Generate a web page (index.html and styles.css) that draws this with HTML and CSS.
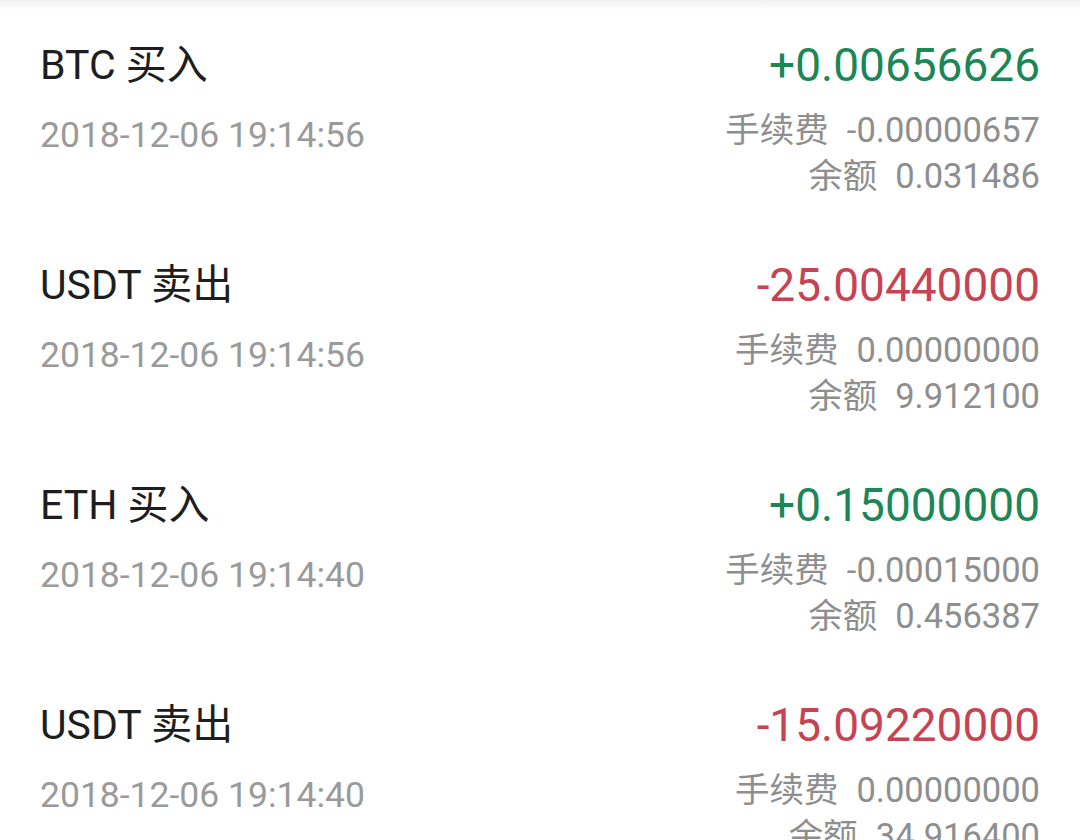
FILE: index.html
```html
<!DOCTYPE html>
<html lang="zh-CN">
<head>
	<meta charset="utf-8" />
	<meta name="viewport" content="width=device-width, initial-scale=1.0" />
	<title>资产记录</title>
	<link rel="stylesheet" href="styles.css">
</head>

<body>
	<div class="top-shade"></div>

	<ul class="record-list">
		<li class="record">
			<div class="record-info">
				<div class="record-title">BTC 买入</div>
				<div class="record-time">2018-12-06 19:14:56</div>
			</div>
			<div class="record-amounts">
				<div class="record-change up">+0.00656626</div>
				<div class="record-line"><span class="label">手续费</span>-0.00000657</div>
				<div class="record-line"><span class="label">余额</span>0.031486</div>
			</div>
		</li>
		<li class="record">
			<div class="record-info">
				<div class="record-title">USDT 卖出</div>
				<div class="record-time">2018-12-06 19:14:56</div>
			</div>
			<div class="record-amounts">
				<div class="record-change down">-25.00440000</div>
				<div class="record-line"><span class="label">手续费</span>0.00000000</div>
				<div class="record-line"><span class="label">余额</span>9.912100</div>
			</div>
		</li>
		<li class="record">
			<div class="record-info">
				<div class="record-title">ETH 买入</div>
				<div class="record-time">2018-12-06 19:14:40</div>
			</div>
			<div class="record-amounts">
				<div class="record-change up">+0.15000000</div>
				<div class="record-line"><span class="label">手续费</span>-0.00015000</div>
				<div class="record-line"><span class="label">余额</span>0.456387</div>
			</div>
		</li>
		<li class="record">
			<div class="record-info">
				<div class="record-title">USDT 卖出</div>
				<div class="record-time">2018-12-06 19:14:40</div>
			</div>
			<div class="record-amounts">
				<div class="record-change down">-15.09220000</div>
				<div class="record-line"><span class="label">手续费</span>0.00000000</div>
				<div class="record-line"><span class="label">余额</span>34.916400</div>
			</div>
		</li>
	</ul>
</body></html>
```

FILE: styles.css
```css
html, body {
	height: 100%;
	overflow: hidden;
}
body {
	margin: 0;
	background: #fff;
	font-family: Roboto, "Noto Sans CJK SC", sans-serif;
	color: #222;
}
.top-shade {
	height: 10px;
	margin-bottom: -10px;
	background: linear-gradient(#f1f1f1, #fff);
}
.record-list {
	list-style: none;
	margin: 0;
	padding: 0;
}
.record {
	display: flex;
	justify-content: space-between;
	height: 220px;
	box-sizing: border-box;
	padding: 40px 40px 0 40px;
}
.record-title {
	font-size: 41px;
	line-height: 50px;
	color: #1e1e1e;
}
.record-time {
	margin-top: 23px;
	font-size: 35.5px;
	line-height: 44px;
	color: #9a9a9a;
}
.record-amounts {
	text-align: right;
}
.record-change {
	font-size: 46px;
	line-height: 50px;
}
.record-change.up {
	color: #1c8656;
}
.record-change.down {
	color: #c74353;
}
.record-change + .record-line {
	margin-top: 17px;
}
.record-line {
	font-size: 34.5px;
	line-height: 46px;
	color: #8e8e8e;
}
.record-line .label {
	margin-right: 18px;
}
```
